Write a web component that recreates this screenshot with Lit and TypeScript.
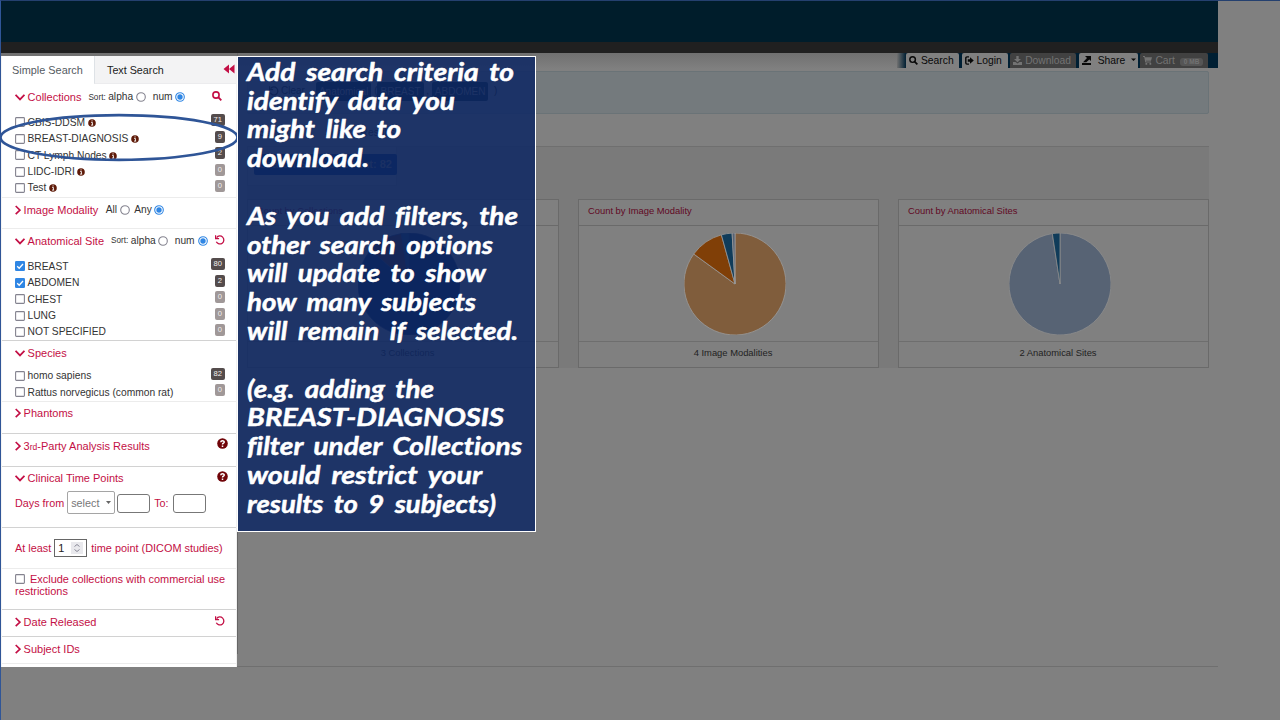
import { LitElement, html, svg, css, nothing } from "lit";
import { customElement } from "lit/decorators.js";

type Item = { label: string; count: number; on?: boolean; info?: boolean };

const COLLECTIONS: Item[] = [
  { label: "CBIS-DDSM", count: 71, info: true },
  { label: "BREAST-DIAGNOSIS", count: 9, info: true },
  { label: "CT Lymph Nodes", count: 2, info: true },
  { label: "LIDC-IDRI", count: 0, info: true },
  { label: "Test", count: 0, info: true },
];
const SITES: Item[] = [
  { label: "BREAST", count: 80, on: true },
  { label: "ABDOMEN", count: 2, on: true },
  { label: "CHEST", count: 0 },
  { label: "LUNG", count: 0 },
  { label: "NOT SPECIFIED", count: 0 },
];
const SPECIES: Item[] = [
  { label: "homo sapiens", count: 82 },
  { label: "Rattus norvegicus (common rat)", count: 0 },
];

// Callout lines: text, row number, rendered width
const NOTE: [string, number, number][] = [
  ["Add search criteria to", 0, 267],
  ["identify data you", 1, 208],
  ["might like to", 2, 154],
  ["download.", 3, 122],
  ["As you add filters, the", 5, 271],
  ["other search options", 6, 246],
  ["will update to show", 7, 239],
  ["how many subjects", 8, 229],
  ["will remain if selected.", 9, 271],
  ["(e.g. adding the", 11, 187],
  ["BREAST-DIAGNOSIS", 12, 257],
  ["filter under Collections", 13, 275],
  ["would restrict your", 14, 235],
  ["results to 9 subjects)", 15, 249],
];

const chevDown = html`<svg class="chev" width="10" height="10" viewBox="0 0 10 10"><path d="M.6 2.8 5 7.4 9.4 2.8" fill="none" stroke="#c30f45" stroke-width="1.7"/></svg>`;
const chevRight = html`<svg class="chev" width="6" height="10" viewBox="0 0 6 10"><path d="M.7 1 5 5.1.7 9.2" fill="none" stroke="#c30f45" stroke-width="1.7"/></svg>`;
const undo = html`<svg class="undo" width="10" height="10" viewBox="0 0 10 10"><path d="M1.6 2.6A4 4 0 1 1 1.3 6.8" fill="none" stroke="currentColor" stroke-width="1.3"/><path d="M.6.2V3.7H4.1" fill="none" stroke="currentColor" stroke-width="1.2"/></svg>`;
const lens = (w: number) => html`<svg width=${w} height=${w} viewBox="0 0 10 10"><circle cx="4" cy="4" r="3.1" fill="none" stroke="currentColor" stroke-width="1.6"/><path d="m6.2 6.2 3.1 3.1" stroke="currentColor" stroke-width="1.9"/></svg>`;
const info = html`<svg class="info" width="8" height="8" viewBox="0 0 8 8"><circle cx="4" cy="4" r="3.8" fill="#5e1a08"/><path d="M3.1 3.4H4.4V6M3 6.1H5.2M3.5 1.9H4.6" stroke="#fff" stroke-width=".9" fill="none"/></svg>`;
const help = html`<svg class="help" width="11" height="11" viewBox="0 0 11 11"><circle cx="5.5" cy="5.5" r="5.3" fill="#700408"/><path d="M3.8 4.2C3.8 2.4 7.3 2.4 7.2 4.2 7.1 5.3 5.6 5.2 5.5 6.5M5.5 7.4V8.9" stroke="#fff" stroke-width="1.5" fill="none"/></svg>`;

const radio = (on: boolean) => html`<svg class="radio" width="10" height="10" viewBox="0 0 10 10"><circle cx="5" cy="5" r="4.3" fill="#fff" stroke=${on ? "#2f86e4" : "#84838f"} stroke-width="1.1"/>${on ? svg`<circle cx="5" cy="5" r="2.7" fill="#2f86e4"/>` : nothing}</svg>`;
const box = (on = false) => html`<svg class="box" width="10" height="10" viewBox="0 0 10 10">${on
  ? svg`<rect width="10" height="10" rx="1.3" fill="#2f86e4"/><path d="m2.2 5.2 2 2L8 3" fill="none" stroke="#fff" stroke-width="1.3"/>`
  : svg`<rect x=".6" y=".6" width="8.8" height="8.8" rx=".8" fill="#fff" stroke="#84838f" stroke-width="1.1"/>`}</svg>`;

const list = (items: Item[]) => items.map((i) => html`<div class="item">${box(i.on)}<span>${i.label}</span>${i.info ? info : nothing}<b class="badge ${i.count ? "" : "zero"}">${i.count}</b></div>`);

type Slice = [number, string];
function pie(slices: Slice[], gap: string) {
  let a = 0;
  const at = (t: number) => `${51 + 51 * Math.sin(t * 2 * Math.PI)} ${51 - 51 * Math.cos(t * 2 * Math.PI)}`;
  return html`<svg width="102" height="102" viewBox="0 0 102 102">${slices.map(([part, fill]) => {
    const from = at(a);
    a += part;
    return svg`<path d="M51 51 L${from} A51 51 0 ${part > 0.5 ? 1 : 0} 1 ${at(a)}Z" fill=${fill} stroke=${gap} stroke-width="0.8"/>`;
  })}</svg>`;
}

@customElement("app-root")
export class AppRoot extends LitElement {
  static styles = css`
    :host { display: block; width: 1280px; height: 720px; overflow: hidden; position: relative; background: #808080; font: 11px/14px "Liberation Sans", Arial, sans-serif; color: #222; }
    * { box-sizing: border-box; }
    svg { display: block; flex: none; }
    .page { width: 1280px; height: 720px; border-left: 1px solid #2f5597; border-top: 1px solid #24406f; }
    .banner { width: 1217px; height: 41px; background: #001d2b; }
    .band { width: 1217px; height: 11px; background: #202020; }
    .body { display: flex; width: 1217px; height: 614px; border-bottom: 1px solid #6f6f6f; background: linear-gradient(#707070, #808080 16px); }
    .side { width: 236px; margin-top: 3px; height: 611px; background: #fff; border-right: 1px solid #f0f0f0; border-left: 1px solid #f4f4f4; flex: none; color: #333; }
    .tabs { display: flex; height: 28px; }
    .tab { width: 92px; padding-left: 10px; line-height: 29px; color: #555b62; font-size: 10.9px; }
    .tab.two { flex: 1; background: #f3f3f4; border-left: 1px solid #dee2e6; border-bottom: 1px solid #ececee; color: #222; padding-left: 12px; font-size: 10.75px; display: flex; justify-content: space-between; }
    .rew { margin: 8px 1px 0 0; }
    .sec { border-bottom: 1px solid #d2d2d2; padding: 0 11px 0 13px; overflow: hidden; }
    .sec.soft { border-bottom: 1px solid #ececec; }
    .coll { height: 114px; } .mod { height: 31px; } .site { height: 112px; } .spec { height: 61px; }
    .phan { height: 32px; } .third { height: 33px; } .clin { height: 61px; } .least { height: 41px; }
    .excl { height: 41px; } .date { height: 27px; } .subj { height: 27px; }
    .head { display: flex; align-items: center; height: 26px; color: #c30f45; font-size: 11px; white-space: pre; }
    .mod .head, .third .head { height: 24px; }
    .clin .head, .phan .head { height: 22.5px; }
    .clin .days { padding-top: 2px; height: 24px; }
    .site .head { height: 23.5px; } .site .list { padding-top: 6px; }
    .date .head, .subj .head { height: 24px; }
    .coll .list { padding-top: 4.5px; } .spec .list { padding-top: 3px; }
    .spec .head { height: 24px; }
    .chev { margin-right: 2.6px; }
    .small { font-size: 8.2px; color: #333; margin-left: 7px; padding-top: 1px; }
    .opt { font-size: 10.2px; color: #333; margin-left: 2.5px; }
    .radio { margin-left: 2px; }
    .coll .radio, .mod .radio { margin-left: 2.6px; }
    .head > .opt + .radio + .opt { margin-left: 7px; }
    .site .radio + .opt + .radio { margin-left: 3px; }
    .mod .head > .opt + .radio + .opt { margin-left: 4.5px; }
    .end { margin-left: auto; margin-right: 3px; position: relative; top: -1px; color: #c30f45; }
    .site .end, .date .end { margin-right: 0; }
    .help { margin-left: auto; margin-right: -3px; position: relative; top: -2.5px; }
    .clin .help { top: -1.5px; }
    .item { display: flex; align-items: center; height: 16.45px; font-size: 10.25px; white-space: pre; }
    .box { margin-right: 2.5px; }
    .item .box { position: relative; top: -.5px; }
    .info { margin-left: 2.5px; position: relative; top: 0; }
    .badge { margin: 0 0 5px auto; height: 12px; min-width: 10px; padding: 0 3px; border-radius: 2px; background: #544c4c; color: #f2eeee; font-weight: 400; font-size: 7.6px; line-height: 12px; }
    .badge.zero { background: #a09898; }
    .sup { font-size: 8.5px; padding-top: 1px; }
    .days { display: flex; align-items: center; height: 22px; color: #c30f45; font-size: 10.8px; }
    .sel { margin-left: 3px; width: 48px; height: 23px; border: 1px solid #a5a5a5; border-radius: 2px; color: #777; padding-left: 3px; line-height: 20px; display: flex; align-items: center; justify-content: space-between; padding-right: 3px; }
    .inp { width: 33px; height: 19px; border: 1px solid #777; border-radius: 3px; margin: 1px 4px 0 2px; }
    .inp:last-child { margin-left: 4px; }
    .num { width: 33px; height: 18px; border: 1px solid #666; margin: 0 4px 0 3px; color: #222; display: flex; padding: 0 3px; justify-content: space-between; align-items: center; }
    .spin { background: #e9e9ed; }
    .line { display: flex; align-items: center; height: 40px; color: #c30f45; font-size: 10.9px; white-space: pre; }
    .excl { color: #c30f45; font-size: 10.95px; line-height: 12.4px; padding-top: 4px; white-space: nowrap; }
    .excl .box { margin-right: 5px; }
    .excl .r { display: flex; align-items: center; white-space: pre; }
    .main { flex: 1; position: relative; border-left: 1px solid #666; height: 601px; padding-left: 9px; }
    .nav { display: flex; height: 15px; margin-left: 650px; background: linear-gradient(90deg, #707070, #001f33 9px); padding-left: 9px; font-size: 10.3px; }
    .nt { background: #808080; height: 14.5px; border-radius: 2px 2px 0 0; display: flex; align-items: center; color: #080808; padding: 1px 0 0 3px; gap: 3px; white-space: pre; margin-right: 2.6px; flex: none; }
    .nt.off { background: #414141; color: #737373; }
    .mb { background: #555; border-radius: 3px; font-size: 6.5px; line-height: 8px; padding: 0 4px; margin-left: 2px; color: #727272; font-weight: bold; margin-top: 2px; }
    .alert { height: 43px; width: 962px; margin-top: 3px; background: #747a7d; border: 1px solid #6a7377; border-radius: 2px; padding-left: 21px; display: flex; align-items: center; font-size: 10px; color: #111; white-space: pre; padding-bottom: 3px; }
    .alert .undo { margin-right: 2px; }
    .chip { background: #001d30; color: #777; height: 19px; line-height: 19px; padding: 0 3px; border-radius: 2px; }
    .chip.first { margin-left: 11px; }
    .sub { height: 33px; display: flex; align-items: center; padding: 6px 0 0 12px; gap: 22px; font-size: 10.3px; width: 962px; border-bottom: 1px solid #6f6f6f; }
    .area { width: 962px; height: 221px; background: #7a7a7a; }
    .count { width: 150px; height: 39px; padding: 7px 0 0 6px; border: 1px solid #707070; border-top: 0; background: #808080; }
    .btn { height: 21px; width: 143px; border-radius: 2px; background: #00285a; color: #666; font: bold 11px/21px "Liberation Sans", Arial, sans-serif; text-align: right; padding-right: 5px; }
    .cards { display: flex; justify-content: space-between; padding-top: 13px; }
    .card { width: 312px; height: 169px; border: 1px solid #6a6a6a; background: #808080; font-size: 9.4px; }
    .card.b { width: 301px; } .card.c { width: 311px; }
    .ct { height: 26px; padding: 4px 9px; color: #600824; border-bottom: 1px solid #6a6a6a; }
    .pie { height: 116px; padding-top: 7px; display: flex; justify-content: center; border-bottom: 1px solid #6e6e6e; padding-left: 12px; }
    .card.c .pie { padding-left: 13px; }
    .foot { text-align: center; padding-top: 4px; font-size: 9.4px; padding-left: 9px; }
    .callout { position: absolute; left: 237px; top: 56px; width: 299px; height: 476px; border: 1.4px solid #fff; background: rgba(14, 40, 99, 0.86); }
    .note { font: italic 700 25px "Segoe Print", Lato, sans-serif; word-spacing: 4px; font-variant-ligatures: none; fill: #fff; stroke: #fff; stroke-width: .5px; stroke-linejoin: round; }
    .ring { position: absolute; left: 0; top: 113px; }
  `;

  render() {
    return html`
      <div class="page">
        <div class="banner"></div>
        <div class="band"></div>
        <div class="body">
          <div class="side">
            <div class="tabs">
              <div class="tab">Simple Search</div>
              <div class="tab two">Text Search<svg class="rew" width="12" height="10" viewBox="0 0 12 10"><path d="M6 .6V9.4L.5 5ZM11.5.6V9.4L6 5Z" fill="#c30f45"/></svg></div>
            </div>
            <div class="sec coll soft">
              <div class="head">${chevDown}Collections<span class="small">Sort:</span><span class="opt">alpha</span>${radio(false)}<span class="opt">num</span>${radio(true)}<span class="end">${lens(10)}</span></div>
              <div class="list">${list(COLLECTIONS)}</div>
            </div>
            <div class="sec mod soft">
              <div class="head">${chevRight}Image Modality<span class="opt">  All</span>${radio(false)}<span class="opt">Any</span>${radio(true)}</div>
            </div>
            <div class="sec site">
              <div class="head">${chevDown}Anatomical Site<span class="small">Sort:</span><span class="opt">alpha</span>${radio(false)}<span class="opt">num</span>${radio(true)}<span class="end">${undo}</span></div>
              <div class="list">${list(SITES)}</div>
            </div>
            <div class="sec spec soft">
              <div class="head">${chevDown}Species</div>
              <div class="list">${list(SPECIES)}</div>
            </div>
            <div class="sec phan"><div class="head">${chevRight}Phantoms</div></div>
            <div class="sec third"><div class="head">${chevRight}3<span class="sup">rd</span>-Party Analysis Results${help}</div></div>
            <div class="sec clin">
              <div class="head">${chevDown}Clinical Time Points${help}</div>
              <div class="days">Days from<span class="sel">select<svg width="5" height="8" viewBox="0 0 5 8"><path d="M0 2h5L2.5 5Z" fill="#666"/></svg></span><span class="inp"></span>To:<span class="inp"></span></div>
            </div>
            <div class="sec least soft"><div class="line">At least<span class="num">1<svg class="spin" width="12" height="12" viewBox="0 0 12 12"><path d="m3.5 4.5 2.5-2 2.5 2M3.5 7.5l2.5 2 2.5-2" fill="none" stroke="#8a8a98"/></svg></span>time point (DICOM studies)</div></div>
            <div class="sec excl"><div class="r">${box()}<span>Exclude collections with commercial use</span></div>restrictions</div>
            <div class="sec date"><div class="head">${chevRight}Date Released<span class="end">${undo}</span></div></div>
            <div class="sec subj soft"><div class="head">${chevRight}Subject IDs</div></div>
          </div>
          <div class="main">
            <div class="nav">
              <div class="nt" style="width:53px">${lens(9)}Search</div>
              <div class="nt" style="width:46px"><svg width="9" height="9" viewBox="0 0 9 9"><path d="M4 .9H2Q.8.9.8 2V7Q.8 8.1 2 8.1H4" fill="none" stroke="#080808" stroke-width="1.4"/><path d="M2.8 3.3H5V1.3L8.8 4.5 5 7.7V5.7H2.8Z" fill="#080808"/></svg>Login</div>
              <div class="nt off" style="width:66px"><svg width="9" height="9" viewBox="0 0 9 9"><path d="M3.3 0H5.7V3H8L4.5 6.3 1 3H3.3ZM0 6H2.5L4.5 7.5 6.5 6H9V9H0Z" fill="#737373"/></svg>Download</div>
              <div class="nt" style="width:59px"><svg width="10" height="9" viewBox="0 0 10 9"><path d="M0 7H9V9H0ZM3 0H9V5L7.3 3.6 4.3 6.2H1L5 2Z" fill="#080808"/></svg> Share <svg width="5" height="9" viewBox="0 0 5 9"><path d="M0 2.5H5L2.5 5Z" fill="#080808"/></svg></div>
              <div class="nt off" style="width:68px"><svg width="9" height="9" viewBox="0 0 9 9"><path d="M0 0H1.8L2.2 1.2H9L8 4.7H3L3.2 5.5H8V6.5H2.3L1.2 1H0ZM2.5 7h1.7v1.7H2.5ZM6.5 7h1.7v1.7H6.5Z" fill="#737373"/></svg>Cart<span class="mb">0 MB</span></div>
            </div>
            <div class="alert">${undo}<span>Clear</span><span class="chip first">Anatomical</span> (<span class="chip">BREAST</span> , <span class="chip">ABDOMEN</span>  )</div>
            <div class="sub"><span>Summary</span><span>Search Results</span></div>
            <div class="area">
              <div class="count"><div class="btn">Search Subject Count: 82</div></div>
              <div class="cards">
                <div class="card"><div class="ct">Count by Collections</div><div class="pie">${pie([[0.866, "#001c48"], [0.11, "#4a1c10"], [0.024, "#183858"]], "#20304f")}</div><div class="foot">3 Collections</div></div>
                <div class="card b"><div class="ct">Count by Image Modality</div><div class="pie">${pie([[0.85, "#805d3c"], [0.107, "#803f07"], [0.034, "#103c5a"], [0.009, "#576374"]], "#999")}</div><div class="foot">4 Image Modalities</div></div>
                <div class="card c"><div class="ct">Count by Anatomical Sites</div><div class="pie">${pie([[0.976, "#576374"], [0.024, "#103c5a"]], "#8d8d8d")}</div><div class="foot">2 Anatomical Sites</div></div>
              </div>
            </div>
          </div>
        </div>
      </div>
      <svg class="ring" width="240" height="50" viewBox="0 0 240 50"><ellipse cx="119" cy="24.5" rx="118.5" ry="22.3" fill="none" stroke="#2f5597" stroke-width="2.7"/></svg>
      <div class="callout">
        <svg width="296" height="473" viewBox="0 0 296 473">
          ${NOTE.map(([t, row, w]) => svg`<text class="note" x="9" y=${23.7 + row * 28.8} textLength=${w} lengthAdjust="spacingAndGlyphs">${t}</text>`)}
        </svg>
      </div>
    `;
  }
}
